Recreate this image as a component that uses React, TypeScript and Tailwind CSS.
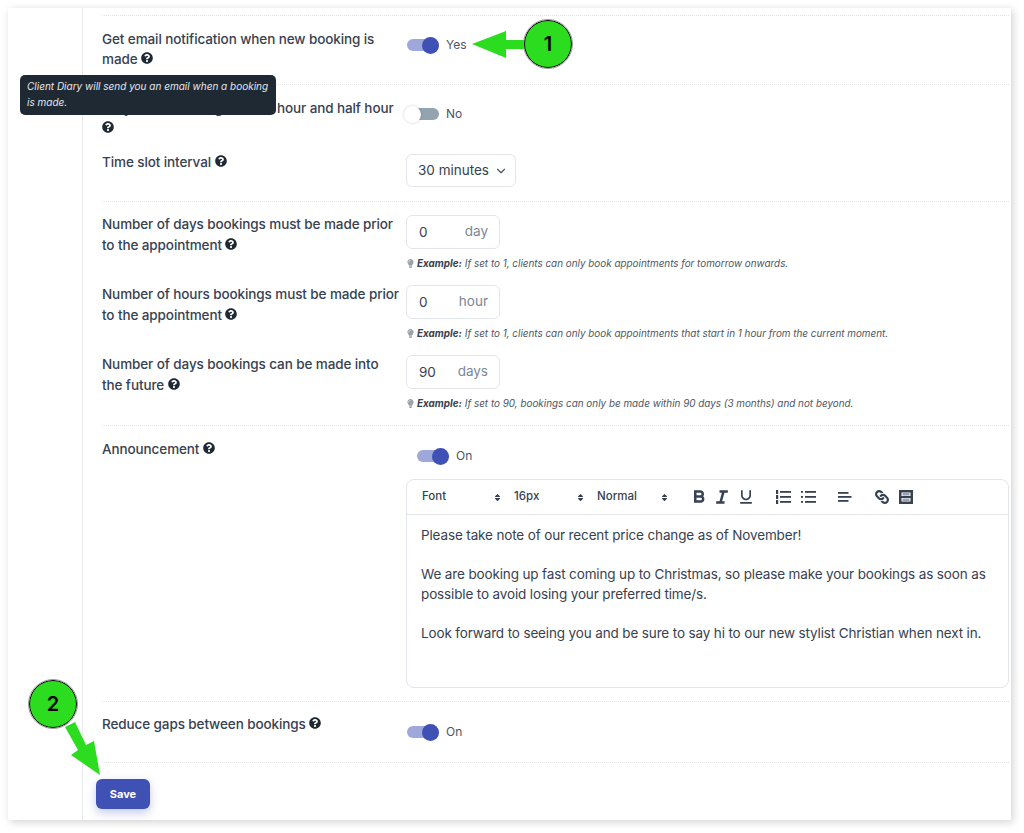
import { ReactNode } from 'react';
import { ChevronDown } from 'lucide-react';
import { FaQuestionCircle, FaLightbulb, FaSort, FaLink } from 'react-icons/fa';
import { BiBold, BiItalic, BiUnderline } from 'react-icons/bi';

const Help = () => <FaQuestionCircle className="inline-block mb-[4px] text-[12px] text-[#1f2933]" />;

const labelClass = 'w-[304px] pr-[5px] text-[13.5px] leading-[20px] tracking-[-0.1px] font-medium text-[#374151]';

function Toggle({ on, label, className = '' }: { on: boolean; label: string; className?: string }) {
  return (
    <div className={`flex items-center ${className}`}>
      {on ? (
        <div className="relative w-[32px] h-[12px] rounded-full bg-[#9fa8da] my-[2px]">
          <div className="absolute right-0 top-[-2.5px] w-[17px] h-[17px] rounded-full bg-[#3f51b5]" />
        </div>
      ) : (
        <div className="relative w-[32px] h-[12px] rounded-full bg-[#94a3b0] my-[2px]">
          <div className="absolute left-[-3px] top-[-2.5px] w-[17px] h-[17px] rounded-full bg-white shadow-[0_0_3px_rgba(0,0,0,0.2)]" />
        </div>
      )}
      <span className="ml-[7px] text-[12px] text-[#4b5563]">{label}</span>
    </div>
  );
}

function NumberRow({ label, value, unit, hint }: { label: ReactNode; value: string; unit: string; hint: string }) {
  return (
    <div className="flex h-[70px]">
      <div className={`${labelClass} -mt-[1px] leading-[21px]`}>{label}</div>
      <div>
        <div className="flex items-center justify-between w-[94px] h-[34px] border border-[#e2e5e9] rounded-[6px] pl-[12px] pr-[11px] text-[13.5px] text-[#374151]">
          <span>{value}</span>
          <span className="text-[#7b8794] -mt-[2px]">{unit}</span>
        </div>
        <div className="flex items-center mt-[7px] text-[9.9px] leading-[14px] italic text-[#4b5563]">
          <FaLightbulb className="text-[9px] text-[#9aa1a9] mr-[2px] not-italic" />
          <b className="font-bold text-[#374151] mr-[3px]">Example:</b>
          {hint}
        </div>
      </div>
    </div>
  );
}

function Tool({ className, children }: { className: string; children: ReactNode }) {
  return <div className={`flex items-center justify-center w-[20px] h-[20px] text-[20px] ${className}`}>{children}</div>;
}

function Lines({ numbered }: { numbered?: boolean }) {
  return (
    <svg viewBox="0 0 16 14" className="w-[16px] h-[14px]" fill="currentColor">
      <rect x="5" y="1" width="11" height="1.8" />
      <rect x="5" y="6" width="11" height="1.8" />
      <rect x="5" y="11" width="11" height="1.8" />
      {numbered ? (
        <>
          <rect x="1" y="0" width="2.2" height="4" />
          <rect x="1" y="5" width="2.2" height="4" />
          <rect x="1" y="10" width="2.2" height="4" />
        </>
      ) : (
        <>
          <rect x="1" y="1" width="2" height="1.8" />
          <rect x="1" y="6" width="2" height="1.8" />
          <rect x="1" y="11" width="2" height="1.8" />
        </>
      )}
    </svg>
  );
}

export default function App() {
  return (
    <div className="relative w-[1024px] h-[833px] bg-white overflow-hidden font-['Inter','Liberation_Sans',sans-serif]">
      <div className="absolute left-[8px] top-[8px] w-[1003px] h-[812px] flex bg-white shadow-[2px_2px_8px_rgba(0,0,0,0.18)]">
        {/* left rail */}
        <div className="w-[75px] shrink-0 border-r border-[#e8eaed]" />

        <div className="flex-1 pl-[19px] pr-[2px] pt-[7px]">
          <div className="border-t border-dotted border-[#e2e5e9]" />

          <div className="flex h-[69px] pt-[13px] border-b border-dotted border-[#e2e5e9]">
            <div className={labelClass}>
              Get email notification when new booking is made <Help />
            </div>
            <Toggle on label="Yes" className="ml-[1px] pt-[7px] self-start" />
          </div>

          <div className="flex h-[59px] pt-[13px]">
            <div className={`${labelClass} leading-[19px]`}>
              Only allow bookings on the hour and half hour <Help />
            </div>
            <Toggle on={false} label="No" className="ml-[1px] pt-[7px] self-start" />
          </div>

          <div className="flex h-[58px] pt-[10px] border-b border-dotted border-[#e2e5e9]">
            <div className={`${labelClass} -mt-[2px]`}>
              Time slot interval <Help />
            </div>
            <div className="flex items-center h-[33px] w-[110px] border border-[#e2e5e9] rounded-[6px] pl-[11px] text-[13.5px] text-[#374151]">
              30 minutes
              <ChevronDown size={14} className="ml-[5px] text-[#4b5563]" />
            </div>
          </div>

          <div className="pt-[13px] pb-[1px]">
            <NumberRow
              label={<>Number of days bookings must be made prior to the appointment <Help /></>}
              value="0"
              unit="day"
              hint="If set to 1, clients can only book appointments for tomorrow onwards."
            />
            <NumberRow
              label={<>Number of hours bookings must be made prior to the appointment <Help /></>}
              value="0"
              unit="hour"
              hint="If set to 1, clients can only book appointments that start in 1 hour from the current moment."
            />
            <NumberRow
              label={<>Number of days bookings can be made into the future <Help /></>}
              value="90"
              unit="days"
              hint="If set to 90, bookings can only be made within 90 days (3 months) and not beyond."
            />
          </div>

          <div className="flex h-[277px] pt-[13px] border-t border-b border-dotted border-[#e2e5e9] -mt-[1px]">
            <div className={labelClass}>
              Announcement <Help />
            </div>
            <div className="flex-1">
              <Toggle on label="On" className="ml-[11px] mt-[8px]" />
              <div className="mt-[14px] h-[209px] border border-[#e2e5e9] rounded-[8px]">
                <div className="flex items-center h-[35px] border-b border-[#e2e5e9] text-[11.5px] font-medium text-[#374151]">
                  <span className="ml-[15px] w-[80px] flex justify-between items-center">Font<FaSort className="text-[9px]" /></span>
                  <span className="ml-[12px] w-[71px] flex justify-between items-center">16px<FaSort className="text-[9px]" /></span>
                  <span className="ml-[12px] w-[72px] flex justify-between items-center">Normal<FaSort className="text-[9px]" /></span>
                  <div className="flex items-center text-[#374151]">
                    <Tool className="ml-[20px]"><BiBold /></Tool>
                    <Tool className="ml-[3px]"><BiItalic /></Tool>
                    <Tool className="ml-[4px]"><BiUnderline /></Tool>
                    <Tool className="ml-[17px]"><Lines numbered /></Tool>
                    <Tool className="ml-[5px]"><Lines /></Tool>
                    <Tool className="ml-[17px]">
                      <svg viewBox="0 0 14 12" className="w-[14px] h-[12px]" fill="currentColor">
                        <rect x="0" y="1" width="10.5" height="1.8" />
                        <rect x="0" y="5" width="13.5" height="1.8" />
                        <rect x="0" y="9" width="10.5" height="1.8" />
                      </svg>
                    </Tool>
                    <Tool className="ml-[17px]"><FaLink className="text-[14px] rotate-90" /></Tool>
                    <Tool className="ml-[4px]">
                      <svg viewBox="0 0 14 14" className="w-[14px] h-[14px]">
                        <rect x="1.25" y="1.25" width="11.5" height="11.5" fill="none" stroke="currentColor" strokeWidth="2.5" />
                        <rect x="1" y="6" width="12" height="2" fill="currentColor" />
                        <rect x="3.5" y="3" width="7" height="2.5" fill="#9ca3af" />
                        <rect x="3.5" y="8.5" width="7" height="2.5" fill="#9ca3af" />
                      </svg>
                    </Tool>
                  </div>
                </div>
                <div className="px-[14px] pt-[11px] text-[13.5px] leading-[19.5px] tracking-[-0.14px] text-[#374151]">
                  <p>Please take note of our recent price change as of November!</p>
                  <p className="mt-[19.5px]">We are booking up fast coming up to Christmas, so please make your bookings as soon as possible to avoid losing your preferred time/s.</p>
                  <p className="mt-[19.5px]">Look forward to seeing you and be sure to say hi to our new stylist Christian when next in.</p>
                </div>
              </div>
            </div>
          </div>

          <div className="flex h-[61px] pt-[12px] border-b border-dotted border-[#e2e5e9]">
            <div className={labelClass}>
              Reduce gaps between bookings <Help />
            </div>
            <Toggle on label="On" className="ml-[1px] mt-[9px] self-start" />
          </div>

          <button className="mt-[16px] -ml-[6px] w-[54px] h-[30px] rounded-[6px] bg-[#3f51b5] text-white text-[11px] font-bold shadow-[0_4px_10px_rgba(63,81,181,0.3)]">
            Save
          </button>
        </div>
      </div>

      {/* tooltip */}
      <div className="absolute left-[20px] top-[75px] w-[256px] h-[40px] rounded-[5px] bg-[#1f2933] px-[7px] py-[3px] text-[10px] leading-[16px] italic text-[#e5e7eb]">
        Client Diary will send you an email when a booking is made.
      </div>

      {/* callouts */}
      <svg className="absolute left-0 top-0" width="1024" height="833" viewBox="0 0 1024 833">
        <polygon points="472,44 506,31 506,40 530,40 530,49 506,49 506,58" fill="#2bdc1f" />
        <polygon points="65,727 75,722 86,745 94,741 100,775 71,755 78,750" fill="#2bdc1f" />
      </svg>
      <Badge n="1" className="left-[524px] top-[20px]" />
      <Badge n="2" className="left-[29px] top-[680px]" />
    </div>
  );
}

function Badge({ n, className }: { n: string; className: string }) {
  return (
    <div className={`absolute w-[48px] h-[48px] rounded-full bg-[#2bdc1f] border-[1.5px] border-black outline outline-[1px] outline-[#9a9a9a] flex items-center justify-center text-[20px] font-semibold text-black ${className}`}>
      {n}
    </div>
  );
}
